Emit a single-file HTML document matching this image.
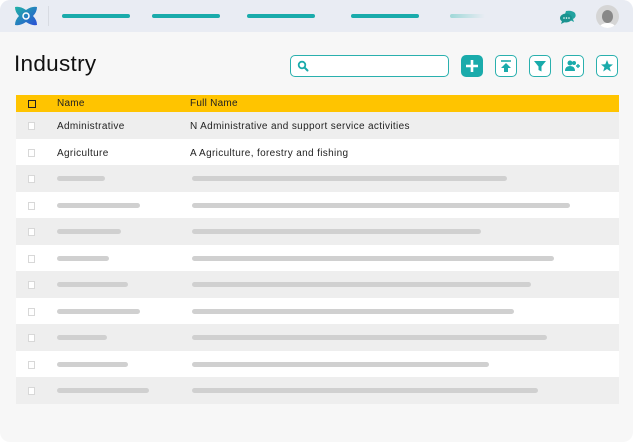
<!DOCTYPE html>
<html><head><style>
*{margin:0;padding:0;box-sizing:border-box}
body{width:635px;height:442px;background:#fff;font-family:"Liberation Sans",sans-serif;position:relative;overflow:hidden}
.card{position:absolute;left:0;top:0;width:633px;height:442px;background:#f7f7f7;border-radius:10px;overflow:hidden}
.top{position:absolute;left:0;top:0;width:633px;height:32px;background:#e9ecf3}
.nav{position:absolute;top:14px;height:4px;border-radius:2px;background:#1aabab}
.h1{position:absolute;left:14px;top:51px;font-size:22.5px;color:#111;letter-spacing:.3px}
.search{position:absolute;left:290px;top:55px;width:159px;height:22px;border:1.3px solid #2ab0ae;border-radius:5px;background:#fff}
.btn{position:absolute;top:55px;width:22px;height:22px;border:1.3px solid #2ab0ae;border-radius:5px;background:#fff}
.table{position:absolute;left:16px;top:95px;width:603px}
.hd{height:17px;background:#ffc400;position:relative;font-size:10px;color:#222;letter-spacing:.25px}
.row{height:26.5px;position:relative;font-size:10px;color:#222;letter-spacing:.35px}
.row:nth-child(even){background:#eeeeee}
.row:nth-child(odd){background:#fff}
.cb{position:absolute;left:12px;top:10px;width:7px;height:8px;border:1px solid #d8d8d8;background:#fff}
.t1{position:absolute;left:41px;top:9px}
.t2{position:absolute;left:174px;top:9px}
.b{position:absolute;top:11px;height:5px;border-radius:3px;background:#d0d0d0}
</style></head><body>
<div class="card">
<div class="top">
<svg style="position:absolute;left:14px;top:5px" width="24" height="22" viewBox="0 0 24 22"><defs><linearGradient id="g" x1="0" y1="0" x2="1" y2="1"><stop offset="0" stop-color="#1fb3a6"/><stop offset="1" stop-color="#2a4fd6"/></linearGradient></defs><path d="M1 2 Q6 1 12 5 Q18 1 23 2 Q23 7 19 11 Q23 15 23 20 Q18 21 12 17 Q6 21 1 20 Q1 15 5 11 Q1 7 1 2Z" fill="url(#g)"/><circle cx="12" cy="11" r="3" fill="none" stroke="#fff" stroke-width="1.5"/></svg>
<div style="position:absolute;left:48px;top:6px;width:1px;height:20px;background:#d8dbe2"></div>
<div class="nav" style="left:62px;width:68px"></div>
<div class="nav" style="left:152px;width:68px"></div>
<div class="nav" style="left:247px;width:68px"></div>
<div class="nav" style="left:351px;width:68px"></div>
<div class="nav" style="left:450px;width:35px;background:linear-gradient(90deg,#9fd8d8,#e9ecf3)"></div>
<svg style="position:absolute;left:559px;top:9px" width="18" height="16" viewBox="0 0 18 16"><path d="M7 2 Q13 1 16 4 Q18 8 14 10 L15 13 L11 11 Q6 11 5 8Z" fill="#23a3a0"/><ellipse cx="7" cy="9" rx="6" ry="4.5" fill="#1a9390"/><path d="M3 12 L2 15 L6 13Z" fill="#1a9390"/><circle cx="5" cy="9" r=".8" fill="#fff"/><circle cx="7.5" cy="9" r=".8" fill="#fff"/><circle cx="10" cy="9" r=".8" fill="#fff"/></svg>
<div style="position:absolute;left:596px;top:5px;width:23px;height:23px;border-radius:50%;background:#d5d5d5;overflow:hidden"><div style="position:absolute;left:6px;top:5px;width:11px;height:13px;border-radius:50%;background:#888"></div><div style="position:absolute;left:4px;top:18px;width:15px;height:8px;border-radius:50%;background:#fff"></div></div>
</div>
<div class="h1">Industry</div>
<div class="search"><svg style="position:absolute;left:6px;top:4px" width="12" height="12" viewBox="0 0 12 12"><circle cx="5" cy="5" r="3.3" fill="none" stroke="#1aabab" stroke-width="1.8"/><path d="M7.5 7.5 L10.5 10.5" stroke="#1aabab" stroke-width="2" stroke-linecap="round"/></svg></div>
<div class="btn" style="left:461px;background:#1aabab;border-color:#1aabab"><svg width="20" height="20" viewBox="0 0 20 20"><path d="M10 4V16M4 10H16" stroke="#fff" stroke-width="2.6"/></svg></div>
<div class="btn" style="left:495px"><svg width="20" height="20" viewBox="0 0 20 20"><path d="M5 5H15" stroke="#1aabab" stroke-width="1.6"/><path d="M10 7L5 12H8V16H12V12H15Z" fill="#1aabab"/></svg></div>
<div class="btn" style="left:529px"><svg width="20" height="20" viewBox="0 0 20 20"><path d="M4 5H16L11.5 10.5V15.5L8.5 14V10.5Z" fill="#1aabab"/></svg></div>
<div class="btn" style="left:562px"><svg width="20" height="20" viewBox="0 0 20 20"><circle cx="7" cy="7" r="2.5" fill="#1aabab"/><path d="M2 15Q2 10 7 10Q12 10 12 15Z" fill="#1aabab"/><circle cx="11" cy="7" r="2" fill="#1aabab"/><path d="M15 8V12M13 10H17" stroke="#1aabab" stroke-width="1.4"/></svg></div>
<div class="btn" style="left:596px"><svg width="20" height="20" viewBox="0 0 20 20"><path d="M10 4L11.7 8.3 16 8.5 12.6 11.2 13.8 15.5 10 13 6.2 15.5 7.4 11.2 4 8.5 8.3 8.3Z" fill="#1aabab"/></svg></div>
<div class="table">
<div class="hd"><div style="position:absolute;left:12px;top:5px;width:8px;height:8px;border:1.4px solid #222"></div><div class="t1" style="top:3px">Name</div><div class="t2" style="top:3px">Full Name</div></div>
<div class="row"><div class="cb"></div><div class="t1">Administrative</div><div class="t2">N Administrative and support service activities</div></div>
<div class="row"><div class="cb"></div><div class="t1">Agriculture</div><div class="t2">A Agriculture, forestry and fishing</div></div>
<div class="row"><div class="cb"></div><div class="b" style="left:41px;width:48px"></div><div class="b" style="left:176px;width:315px"></div></div>
<div class="row"><div class="cb"></div><div class="b" style="left:41px;width:83px"></div><div class="b" style="left:176px;width:378px"></div></div>
<div class="row"><div class="cb"></div><div class="b" style="left:41px;width:64px"></div><div class="b" style="left:176px;width:289px"></div></div>
<div class="row"><div class="cb"></div><div class="b" style="left:41px;width:52px"></div><div class="b" style="left:176px;width:362px"></div></div>
<div class="row"><div class="cb"></div><div class="b" style="left:41px;width:71px"></div><div class="b" style="left:176px;width:339px"></div></div>
<div class="row"><div class="cb"></div><div class="b" style="left:41px;width:83px"></div><div class="b" style="left:176px;width:322px"></div></div>
<div class="row"><div class="cb"></div><div class="b" style="left:41px;width:50px"></div><div class="b" style="left:176px;width:355px"></div></div>
<div class="row"><div class="cb"></div><div class="b" style="left:41px;width:71px"></div><div class="b" style="left:176px;width:297px"></div></div>
<div class="row"><div class="cb"></div><div class="b" style="left:41px;width:92px"></div><div class="b" style="left:176px;width:346px"></div></div>
</div>
</div>
</body></html>
